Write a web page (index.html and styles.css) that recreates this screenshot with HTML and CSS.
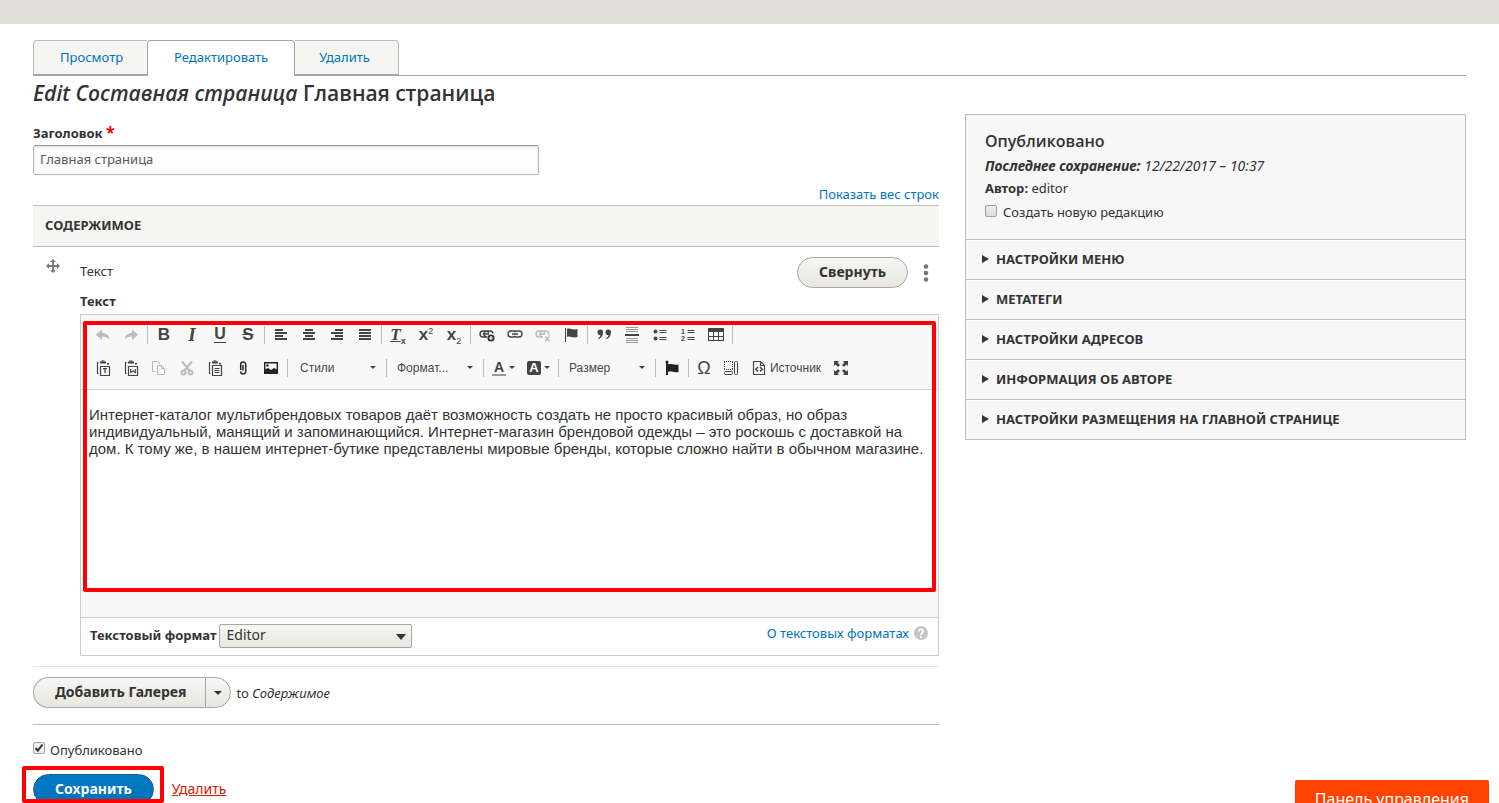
FILE: index.html
```html
<!DOCTYPE html>
<html lang="ru">
<head>
<meta charset="utf-8">
<title>Главная страница</title>
<link rel="stylesheet" href="styles.css">
</head>
<body>
<div class="topbar"></div>
<main class="page">
  <nav class="tabs">
    <a class="tab" href="#view">Просмотр</a>
    <a class="tab tab-active" href="#edit">Редактировать</a>
    <a class="tab tab-last" href="#delete">Удалить</a>
  </nav>
  <h1 class="title"><em>Edit Составная страница</em> Главная страница</h1>
  <form class="layout">
    <div class="main-col">
      <label class="label" for="title">Заголовок <span class="required">*</span></label>
      <input class="text-input" id="title" type="text" value="Главная страница">
      <a class="weights" href="#weights">Показать вес строк</a>
      <table class="content-table">
        <thead><tr><th colspan="2">СОДЕРЖИМОЕ</th></tr></thead>
        <tbody><tr>
          <td class="drag-cell">
            <svg class="drag" width="14" height="14" viewBox="0 0 14 14"><path d="M7 1v12M1 7h12" stroke="#777" stroke-width="1.8"/><path d="M7 0l3 3H4zM7 14l3-3H4zM0 7l3-3v6zM14 7l-3-3v6z" fill="#777"/></svg>
          </td>
          <td class="body-cell">
            <div class="para-head">
              <span class="para-type">Текст</span>
              <span class="para-actions">
                <button class="btn" type="button">Свернуть</button>
                <button class="more" type="button" aria-label="Ещё"><svg width="6" height="18" viewBox="0 0 6 18" fill="#777"><circle cx="3" cy="2.5" r="2.3"/><circle cx="3" cy="9" r="2.3"/><circle cx="3" cy="15.5" r="2.3"/></svg></button>
              </span>
            </div>
            <div class="label field-label">Текст</div>
            <div class="editor">
              <div class="toolbar">
                <div class="tool-row">
                  <button class="tool" type="button" aria-label="Отменить"><svg width="16" height="16" viewBox="0 0 16 16" fill="#bbb"><path d="M7 2.500v3.500c4.500 0 7 2.500 7.500 6.500-2-2.200-4-3-7.500-3V13L1 7.700z"/></svg></button>
                  <button class="tool" type="button" aria-label="Повторить"><svg width="16" height="16" viewBox="0 0 16 16" fill="#bbb"><path d="M9 2.500v3.500c-4.500 0-7 2.500-7.500 6.500 2-2.200 4-3 7.500-3V13l6-5.300z"/></svg></button>
                  <span class="sep"></span>
                  <button class="tool glyph" type="button"><b>B</b></button>
                  <button class="tool glyph serif" type="button"><i>I</i></button>
                  <button class="tool glyph glyph-u" type="button"><span>U</span></button>
                  <button class="tool glyph" type="button"><s>S</s></button>
                  <span class="sep"></span>
                  <button class="tool" type="button" aria-label="По левому краю"><svg width="16" height="16" viewBox="0 0 16 16" stroke="#444" stroke-width="2"><path d="M2 3h8M2 6h12M2 9h8M2 12h12"/></svg></button>
                  <button class="tool" type="button" aria-label="По центру"><svg width="16" height="16" viewBox="0 0 16 16" stroke="#444" stroke-width="2"><path d="M4 3h8M2 6h12M4 9h8M2 12h12"/></svg></button>
                  <button class="tool" type="button" aria-label="По правому краю"><svg width="16" height="16" viewBox="0 0 16 16" stroke="#444" stroke-width="2"><path d="M6 3h8M2 6h12M6 9h8M2 12h12"/></svg></button>
                  <button class="tool" type="button" aria-label="По ширине"><svg width="16" height="16" viewBox="0 0 16 16" stroke="#444" stroke-width="2"><path d="M2 3h12M2 6h12M2 9h12M2 12h12"/></svg></button>
                  <span class="sep"></span>
                  <button class="tool glyph remove-format" type="button"><u><i>T</i></u><sub>x</sub></button>
                  <button class="tool glyph script" type="button">x<sup>2</sup></button>
                  <button class="tool glyph script" type="button">x<sub>2</sub></button>
                  <span class="sep"></span>
                  <button class="tool" type="button" aria-label="Ссылка"><svg width="18" height="16" viewBox="0 0 18 16" fill="none" stroke="#444" stroke-width="1.400"><path d="M7.500 10H5a3 3 0 0 1 0-6h3a3 3 0 0 1 2.800 2M5 7h6M9 10a3 3 0 0 1 0-6h3a3 3 0 0 1 3 2.500"/><circle cx="13" cy="11" r="3.600" fill="#333" stroke="none"/><path d="M13 9v4M11 11h4" stroke="#fff" stroke-width="1.200"/></svg></button>
                  <button class="tool" type="button" aria-label="Изменить ссылку"><svg width="16" height="16" viewBox="0 0 16 16" fill="none" stroke="#444" stroke-width="1.400"><path d="M8.500 9a2.500 2.500 0 0 1-2 1H4a3 3 0 0 1 0-6h2.500a2.500 2.500 0 0 1 2 1M7.500 5a2.500 2.500 0 0 1 2-1H12a3 3 0 0 1 0 6H9.500a2.500 2.500 0 0 1-2-1M5 7h6"/></svg></button>
                  <button class="tool" type="button" aria-label="Убрать ссылку"><svg width="18" height="16" viewBox="0 0 18 16" fill="none" stroke="#bbb" stroke-width="1.400"><path d="M7.500 10H5a3 3 0 0 1 0-6h3a3 3 0 0 1 2.800 2M5 7h6M9 10a3 3 0 0 1 0-6h3a3 3 0 0 1 2.500 4.500M11 9.500l4.500 4.500M15.500 9.500L11 14"/></svg></button>
                  <button class="tool" type="button" aria-label="Якорь"><svg width="16" height="16" viewBox="0 0 16 16"><path d="M2.500 1v14" stroke="#444"/><path d="M4 2c3-1.500 5 1.500 10.500 0v8C9 11.500 7 8.500 4 10z" fill="#444"/></svg></button>
                  <span class="sep"></span>
                  <button class="tool" type="button" aria-label="Цитата"><svg width="16" height="16" viewBox="0 0 16 16" fill="#444"><path d="M4.200 2.500a2.700 2.700 0 0 1 2.800 2.900c0 3.300-2 5.800-4.600 6.800l-.4-.8c1.500-.8 2.300-1.900 2.400-3.300a2.800 2.800 0 1 1-.2-5.600zM12.200 2.500a2.700 2.700 0 0 1 2.800 2.900c0 3.300-2 5.800-4.600 6.800l-.4-.8c1.500-.8 2.300-1.900 2.400-3.300a2.800 2.800 0 1 1-.2-5.600z"/></svg></button>
                  <button class="tool" type="button" aria-label="Линия"><svg width="16" height="16" viewBox="0 0 16 16"><path d="M2 .5h12M2 2.500h12M2 4.500h12M2 11.500h12M2 13.500h12M2 15.500h12" stroke="#999"/><path d="M1 8h14" stroke="#444" stroke-width="2"/></svg></button>
                  <button class="tool" type="button" aria-label="Маркированный список"><svg width="16" height="16" viewBox="0 0 16 16"><circle cx="3.500" cy="4.500" r="2" fill="#444"/><circle cx="3.500" cy="11.500" r="2" fill="#444"/><path d="M7.500 3.500h7M7.500 5.500h7M7.500 10.500h7M7.500 12.500h7" stroke="#444"/></svg></button>
                  <button class="tool" type="button" aria-label="Нумерованный список"><svg width="16" height="16" viewBox="0 0 16 16"><path d="M7.500 3.500h7M7.500 5.500h7M7.500 10.500h7M7.500 12.500h7" stroke="#444"/><text x="1" y="7" font-size="7" font-weight="700" fill="#444">1</text><text x="1" y="14" font-size="7" font-weight="700" fill="#444">2</text></svg></button>
                  <button class="tool" type="button" aria-label="Таблица"><svg width="16" height="16" viewBox="0 0 16 16" fill="none" stroke="#444"><path d="M.5 1.500h15v12H.5zM5.500 5v9M10.500 5v9M1 9.500h14"/><path d="M0 3h16" stroke-width="4"/></svg></button>
                  <span class="sep"></span>
                </div>
                <div class="tool-row">
                  <button class="tool" type="button" aria-label="Вставить только текст"><svg width="16" height="16" viewBox="0 0 16 16" fill="none" stroke="#444" stroke-width="1.200"><path d="M3.500 2.500h-1v11h1"/><path d="M5 2.500h6M13 3v1.500" stroke-width="2"/><path d="M6.500 1h3"/><path d="M5.500 6.500h9v9h-9z"/><path d="M8 8.700h4M10 8.700v4.500"/></svg></button>
                  <button class="tool" type="button" aria-label="Вставить из Word"><svg width="16" height="16" viewBox="0 0 16 16" fill="none" stroke="#444" stroke-width="1.200"><path d="M3.500 2.500h-1v11h1"/><path d="M5 2.500h6M13 3v1.500" stroke-width="2"/><path d="M6.500 1h3"/><path d="M5.500 6.500h9v9h-9z"/><path d="M7.700 9v3.500L10 11l2.300 1.500V9"/></svg></button>
                  <button class="tool" type="button" aria-label="Копировать"><svg width="16" height="16" viewBox="0 0 16 16" fill="none" stroke="#bbb"><path d="M4.500 11.500h-3v-10h5l3 3"/><path d="M6.500 5.500h4l3 3v6h-7zM10.500 5.500v3h3"/></svg></button>
                  <button class="tool" type="button" aria-label="Вырезать"><svg width="16" height="16" viewBox="0 0 16 16" fill="none" stroke="#bbb" stroke-width="2"><path d="M3 1.500l7.500 9M13 1.500L5.500 10.500"/><circle cx="4.500" cy="12.500" r="2"/><circle cx="11.500" cy="12.500" r="2"/></svg></button>
                  <button class="tool" type="button" aria-label="Вставить"><svg width="16" height="16" viewBox="0 0 16 16" fill="none" stroke="#444" stroke-width="1.200"><path d="M3.500 2.500h-1v11h1"/><path d="M5 2.500h6M13 3v1.500" stroke-width="2"/><path d="M6.500 1h3"/><path d="M5.500 5.500h9v10h-9zM7.500 8.500h5M7.500 10.500h5M7.500 12.500h5"/></svg></button>
                  <button class="tool" type="button" aria-label="Файл"><svg width="16" height="16" viewBox="0 0 16 16" fill="none" stroke="#222" stroke-width="1.500"><path d="M8 5v5.500M5.700 10V4.500a2.500 2.500 0 0 1 5 0v7a2.500 2.500 0 0 1-5 0"/></svg></button>
                  <button class="tool" type="button" aria-label="Изображение"><svg width="16" height="16" viewBox="0 0 16 16"><path d="M1.700 2.700h12.600v10.600H1.700z" fill="none" stroke="#222" stroke-width="1.400"/><path d="M2 12V9.500l3-1.500 3 2 3-2 3 1.500v3.500H2z" fill="#222"/><circle cx="4.500" cy="5.500" r="1.200" fill="#222"/></svg></button>
                  <span class="sep"></span>
                  <span class="combo combo-wide"><select aria-label="Стили"><option>Стили</option></select></span>
                  <span class="sep"></span>
                  <span class="combo"><select aria-label="Форматирование"><option>Формат...</option></select></span>
                  <span class="sep"></span>
                  <button class="tool tool-color glyph" type="button"><span class="text-color">A</span></button>
                  <button class="tool tool-color glyph" type="button"><span class="bg-color">A</span></button>
                  <span class="sep"></span>
                  <span class="combo"><select aria-label="Размер"><option>Размер</option></select></span>
                  <span class="sep"></span>
                  <button class="tool" type="button" aria-label="Флаг"><svg width="16" height="16" viewBox="0 0 16 16" fill="#222"><path d="M2 2h2v13H2zM4 4.500c3-1.500 5 1 10.500 0V12C9 13 7 10.500 4 12z"/><circle cx="3" cy="2" r="1.500"/></svg></button>
                  <span class="sep"></span>
                  <button class="tool glyph omega" type="button">Ω</button>
                  <button class="tool" type="button" aria-label="Показать блоки"><svg width="16" height="16" viewBox="0 0 16 16" fill="none" stroke="#444"><path d="M1 1.500h9M1.500 2v8M9.500 2v8M1 9.500h9" stroke-dasharray="1 1"/><rect x="1.500" y="11.500" width="8" height="3" rx="1"/><rect x="11.500" y="1.500" width="3" height="13" rx="1"/></svg></button>
                  <button class="tool tool-source" type="button"><svg width="16" height="16" viewBox="0 0 16 16" fill="none" stroke="#444" stroke-width="1.200"><path d="M2.500 1.500h7l4 4v9h-11zM9.500 1.500v4h4"/><path d="M7 7L4.800 9.200 7 11.400M9 7l2.200 2.200L9 11.400" stroke-width="1.500"/></svg>Источник</button>
                  <button class="tool" type="button" aria-label="Развернуть"><svg width="16" height="16" viewBox="0 0 16 16"><path d="M1 1h5L4.600 2.600 7 5 5 7 2.600 4.600 1 6zM15 1v5l-1.600-1.400L11 7 9 5l2.400-2.400L10 1zM1 15v-5l1.600 1.400L5 9l2 2-2.400 2.400L6 15zM15 15h-5l1.400-1.600L9 11l2-2 2.400 2.400L15 10z" fill="#444"/></svg></button>
                </div>
              </div>
              <div class="edit-area" contenteditable="true" role="textbox" aria-label="Текст">Интернет-каталог мультибрендовых товаров даёт возможность создать не просто красивый образ, но образ индивидуальный, манящий и запоминающийся. Интернет-магазин брендовой одежды – это роскошь с доставкой на дом. К тому же, в нашем интернет-бутике представлены мировые бренды, которые сложно найти в обычном магазине.</div>
              <div class="editor-foot"></div>
              <div class="format-row">
                <label class="label" for="format">Текстовый формат</label>
                <span class="select-wrap"><select class="format-select" id="format"><option>Editor</option></select></span>
                <a class="help" href="#formats">О текстовых форматах <svg width="14" height="14" viewBox="0 0 14 14"><circle cx="7" cy="7" r="7" fill="#c4c4c4"/><path d="M4.900 5.400a2.100 2.100 0 1 1 3.300 1.700C7.300 7.700 7 8 7 8.900" fill="none" stroke="#fff" stroke-width="1.700"/><circle cx="7" cy="11" r="1.100" fill="#fff"/></svg></a>
              </div>
              <div class="mark mark-editor"></div>
            </div>
          </td>
        </tr></tbody>
      </table>
      <div class="add-row">
        <span class="dropbutton"><button class="btn btn-left" type="button">Добавить Галерея</button><button class="btn btn-right" type="button" aria-label="Другие"><span class="caret"></span></button></span>
        <span>to <em>Содержимое</em></span>
      </div>
      <div class="publish"><input class="check" id="published" type="checkbox" checked><label for="published">Опубликовано</label></div>
      <div class="actions">
        <button class="btn btn-primary" type="button">Сохранить</button>
        <a class="delete" href="#delete">Удалить</a>
        <div class="mark mark-save"></div>
      </div>
    </div>
    <aside class="side">
      <div class="meta">
        <h2 class="status">Опубликовано</h2>
        <p class="meta-line meta-date"><em><b>Последнее сохранение:</b> 12/22/2017 – 10:37</em></p>
        <p class="meta-line"><b>Автор:</b> editor</p>
        <div class="meta-line check-line"><input class="check" id="revision" type="checkbox"><label for="revision">Создать новую редакцию</label></div>
      </div>
      <details class="group"><summary>НАСТРОЙКИ МЕНЮ</summary></details>
      <details class="group"><summary>МЕТАТЕГИ</summary></details>
      <details class="group"><summary>НАСТРОЙКИ АДРЕСОВ</summary></details>
      <details class="group"><summary>ИНФОРМАЦИЯ ОБ АВТОРЕ</summary></details>
      <details class="group"><summary>НАСТРОЙКИ РАЗМЕЩЕНИЯ НА ГЛАВНОЙ СТРАНИЦЕ</summary></details>
    </aside>
  </form>
</main>
<button class="panel-button" type="button">Панель управления</button>
</body>
</html>
```
FILE: styles.css
```css
* { box-sizing: border-box; }
body {
  margin: 0;
  height: 100vh;
  overflow: hidden;
  background: #fff;
  color: #333;
  font: 13px/20px "Noto Sans", "Open Sans", sans-serif;
}
button, input, select { font: inherit; color: inherit; margin: 0; }
button { cursor: pointer; }
a { color: #0074bd; text-decoration: none; }
svg { display: block; flex: none; }

.topbar { height: 24px; background: #e0e0d8; }
.page { padding: 16px 33px 0; }

.tabs { display: flex; height: 36px; }
.tabs::after { content: ""; flex: 1; height: 35px; border-bottom: 1px solid #a6a6a6; }
.tab {
  padding: 6px 24px 0 26px;
  background: #f5f5f2;
  border: 1px solid #bbb;
  border-bottom: 2px solid #a6a6a6;
  border-right: 0;
  border-radius: 4px 0 0 0;
}
.tab-active {
  background: #fff;
  border: 1px solid #a6a6a6;
  border-bottom: 0;
  border-radius: 4px 4px 0 0;
  padding: 6px 26px 0 26px;
}
.tab-last { border-left: 0; border-right: 1px solid #bbb; border-radius: 0 4px 0 0; padding: 6px 28px 0 24px; }

.title { margin: 3px 0 0; font-size: 21px; line-height: 28px; font-weight: 600; font-family: "Open Sans", "Noto Sans", sans-serif; }

.layout { display: grid; grid-template-columns: 906fr 501fr; gap: 26px; align-items: start; }
.main-col { display: flex; flex-direction: column; min-width: 0; padding-top: 16px; }
.label { font-weight: 700; }
.required { color: #e00; font-size: 16px; line-height: 16px; }
.text-input {
  width: 506px;
  max-width: 100%;
  height: 30px;
  margin-top: 2px;
  padding: 0 6px 2px;
  background: #fcfcfa;
  border: 1px solid #b8b8b8;
  border-top-color: #999;
  border-radius: 2px;
  box-shadow: inset 0 1px 2px rgba(0, 0, 0, .12);
  color: #595959;
}
.weights { align-self: flex-end; margin: 9px 0 1px; }

.content-table { width: 100%; border-collapse: collapse; }
.content-table th {
  height: 41px;
  padding: 0 12px 2px;
  text-align: left;
  background: #f5f5f2;
  border-top: 1px solid #bfbfba;
  border-bottom: 1px solid #bfbfba;
}
.content-table td { padding: 0; vertical-align: top; border-bottom: 1px solid #e6e4df; }
.content-table .drag-cell { width: 47px; padding: 12px 0 0 13px; }
.content-table .body-cell { padding: 10px 0; }
.para-head { display: flex; justify-content: space-between; align-items: center; height: 31px; }
.para-type { padding-bottom: 4px; }
.para-actions { display: flex; align-items: center; gap: 10px; }
.field-label { padding-top: 3px; line-height: 20px; padding-bottom: 3px; }
.more { display: flex; justify-content: center; width: 16px; padding: 0; border: 0; background: none; margin-right: 5px; }

.btn {
  height: 31px;
  padding: 0 21px 2px;
  border: 1px solid #a6a6a6;
  border-radius: 16px;
  background: linear-gradient(#f6f6f3, #e7e7df);
  font-size: 14px;
  font-weight: 700;
  line-height: 20px;
}

.editor { position: relative; border: 1px solid #ccc; }
.toolbar { padding: 3px 8px 5px; background: #f8f8f8; border-bottom: 1px solid #d1d1d1; }
.tool-row { display: flex; align-items: center; height: 33px; }
.tool {
  display: flex;
  align-items: center;
  justify-content: center;
  width: 28px;
  height: 28px;
  padding: 0;
  border: 0;
  background: none;
  font-family: "Liberation Sans", Arial, sans-serif;
  color: #444;
}
.sep { width: 5px; height: 18px; background: linear-gradient(#bcbcbc, #bcbcbc) center / 1px 100% no-repeat; flex: none; }
.glyph { font-size: 17px; font-weight: 700; }
.serif { font-family: "Liberation Serif", serif; font-size: 19px; }
.glyph-u span { border-bottom: 1px solid #444; line-height: 16px; font-size: 16px; }
.remove-format { font-family: "Liberation Serif", serif; }
.remove-format sub, .script sub, .script sup { font: 400 9px/9px "Liberation Sans", Arial, sans-serif; }
.remove-format sub { font-weight: 700; }
.remove-format sub, .script sub { align-self: flex-end; padding-bottom: 3px; }
.script sup { align-self: flex-start; padding-top: 6px; }
.omega { width: 26px; font-size: 18px; font-weight: 400; }
.combo { display: flex; align-items: center; width: 92px; padding: 0 8px; }
.combo-wide { width: 94px; padding-left: 10px; }
.combo select {
  flex: 1;
  min-width: 0;
  appearance: none;
  border: 0;
  padding: 0;
  background: none;
  font: 12px/16px "Liberation Sans", Arial, sans-serif;
  color: #484848;
}
.combo::after, .tool-color::after { content: ""; border: 3px solid transparent; border-top-color: #444; border-bottom: 0; }
.tool-color { width: 35px; gap: 3px; }
.text-color { font-size: 14px; line-height: 14px; padding: 0 2px; border-bottom: 2px solid #999; }
.bg-color { width: 14px; background: #444; color: #fff; font-size: 13px; line-height: 14px; border-radius: 2px; }
.tool-source { width: 82px; gap: 3px; font-size: 12px; }

.edit-area {
  height: 200px;
  padding: 16px 8px;
  font: 15px/17px "Liberation Sans", Arial, sans-serif;
  outline: 0;
}
.editor-foot { height: 28px; background: #f8f8f8; border-top: 1px solid #d1d1d1; border-bottom: 1px solid #d1d1d1; }
.format-row { display: flex; align-items: flex-start; gap: 2px; height: 37px; padding: 6px 10px 0 9px; }
.format-row .label { line-height: 22px; }
.select-wrap { position: relative; }
.select-wrap::after {
  content: "";
  position: absolute;
  right: 6px;
  top: 10px;
  border: 5px solid transparent;
  border-top: 6px solid #333;
  border-bottom: 0;
  pointer-events: none;
}
.format-select {
  display: block;
  width: 193px;
  height: 24px;
  padding: 0 7px 2px;
  appearance: none;
  border: 1px solid #a6a6a6;
  border-radius: 2px;
  background: linear-gradient(#f6f6f3, #e7e7df);
  font-size: 14px;
  line-height: 20px;
}
.help { display: flex; align-items: center; gap: 5px; margin-left: auto; line-height: 18px; }

.mark { position: absolute; border: 4px solid #f00; border-radius: 2px; pointer-events: none; }
.mark-editor { top: 6px; left: 2px; right: 2px; height: 271px; }
.mark-save { top: -8px; left: -11px; width: 142px; height: 37px; }

.add-row { display: flex; align-items: center; gap: 5px; padding: 10px 0 16px; border-bottom: 1px solid #bfbfba; }
.dropbutton { display: flex; }
.btn-left { border-radius: 16px 0 0 16px; border-right: 0; padding-right: 19px; }
.btn-right { display: flex; align-items: center; border-radius: 0 16px 16px 0; padding: 0 8px; }
.caret { border: 4px solid transparent; border-top-color: #333; border-bottom: 0; }

.publish { display: flex; gap: 5px; padding-top: 15px; }
.check {
  appearance: none;
  width: 12px;
  height: 12px;
  margin-top: 2px;
  border: 1px solid #a0a0a0;
  border-radius: 2px;
  background: linear-gradient(#eee, #ddd);
}
.check:checked {
  background: url("data:image/svg+xml,%3Csvg xmlns='http://www.w3.org/2000/svg' viewBox='0 0 10 10'%3E%3Cpath d='M1.500 5l2.300 2.700L8.500 1.500' fill='none' stroke='%23333' stroke-width='2'/%3E%3C/svg%3E") center / 10px no-repeat #eee;
}
.actions { position: relative; display: flex; align-items: center; gap: 18px; margin-top: 14px; }
.btn-primary { border-color: #1e5c90; background: linear-gradient(#007bc6, #0071b8); color: #fff; }
.delete { padding-bottom: 2px; color: #c72100; font-size: 14px; text-decoration: underline; }

.side { margin-top: 7px; background: #f7f7f7; border: 1px solid #bfbfbf; }
.meta { padding: 15px 19px; height: 124px; }
.status { margin: 0 0 2px; font: 600 16px/22px "Open Sans", "Noto Sans", sans-serif; }
.meta-line { margin: 0; line-height: 23px; }
.meta-date { font-size: 14px; }
.check-line { display: flex; gap: 6px; line-height: 24px; }
.check-line .check { margin-top: 5px; }
.group { border-top: 1px solid #bfbfbf; box-shadow: inset 0 1px 0 #fff; }
.group summary {
  display: flex;
  align-items: center;
  gap: 7px;
  height: 39px;
  padding: 0 16px 2px;
  list-style: none;
  font-weight: 700;
}
.group summary::before { content: ""; border: 4px solid transparent; border-left: 7px solid #333; border-right: 0; }

.panel-button {
  position: fixed;
  right: 10px;
  bottom: -14px;
  height: 37px;
  padding: 0 20px;
  border: 0;
  border-radius: 2px;
  background: #ff4300;
  color: #fff;
  font-size: 16px;
}
```
